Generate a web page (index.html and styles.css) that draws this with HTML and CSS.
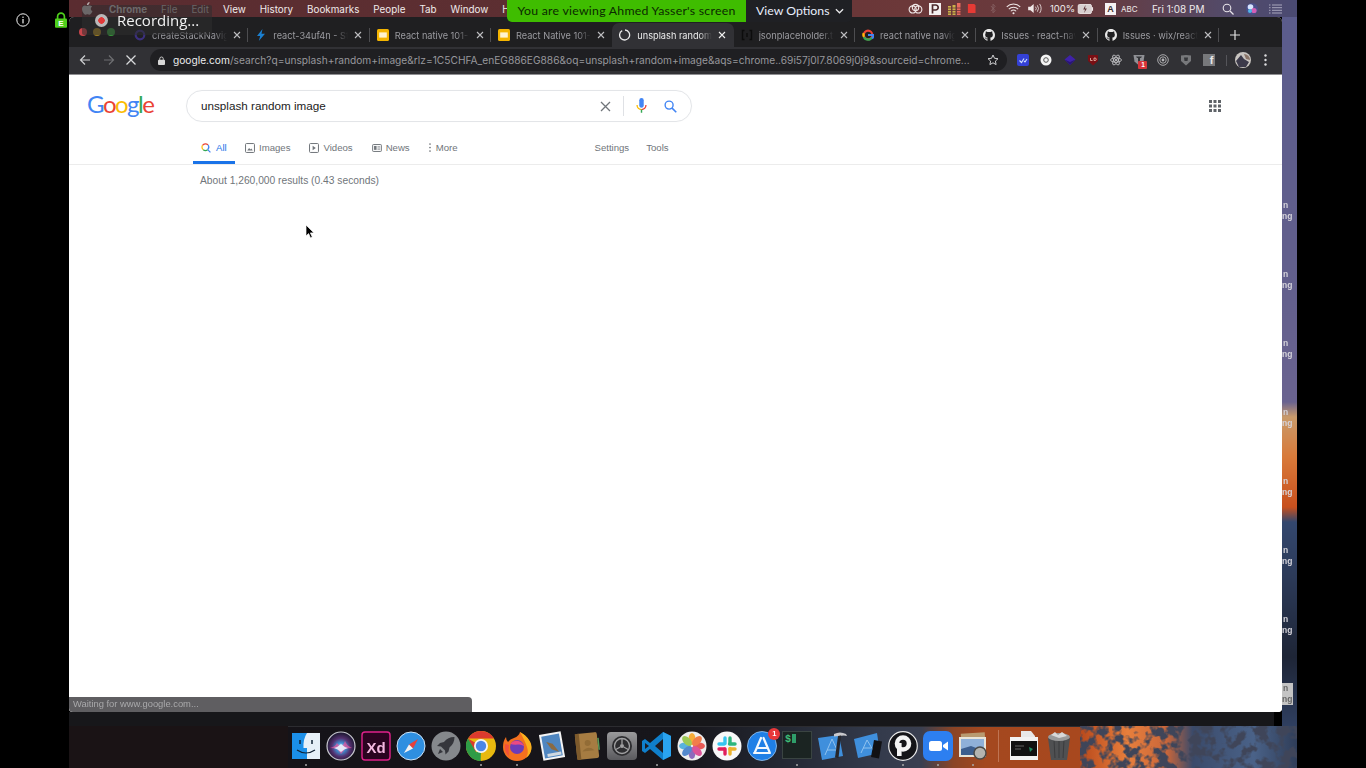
FILE: index.html
```html
<!DOCTYPE html>
<html lang="en">
<head>
<meta charset="utf-8">
<title>Google search screen share</title>
<link rel="stylesheet" href="styles.css">
</head>
<body>
<svg class="defs" width="0" height="0" aria-hidden="true">
  <symbol id="gh" viewBox="0 0 16 16"><path fill="#e8e8e8" d="M8 0C3.58 0 0 3.58 0 8c0 3.54 2.29 6.53 5.47 7.59.4.07.55-.17.55-.38 0-.19-.01-.82-.01-1.49-2.01.37-2.53-.49-2.69-.94-.09-.23-.48-.94-.82-1.13-.28-.15-.68-.52-.01-.53.63-.01 1.08.58 1.23.82.72 1.21 1.87.87 2.33.66.07-.52.28-.87.51-1.07-1.78-.2-3.64-.89-3.64-3.95 0-.87.31-1.59.82-2.15-.08-.2-.36-1.02.08-2.12 0 0 .67-.21 2.2.82.64-.18 1.32-.27 2-.27.68 0 1.36.09 2 .27 1.53-1.04 2.2-.82 2.2-.82.44 1.1.16 1.92.08 2.12.51.56.82 1.27.82 2.15 0 3.07-1.87 3.75-3.65 3.95.29.25.54.73.54 1.48 0 1.07-.01 1.93-.01 2.2 0 .21.15.46.55.38A8.013 8.013 0 0016 8c0-4.42-3.58-8-8-8z"/></symbol>
  <symbol id="slides" viewBox="0 0 12 12"><rect width="12" height="12" rx="1.5" fill="#f4b400"/><rect x="2.2" y="3.4" width="7.6" height="5.2" fill="#fff3cf"/></symbol>
  <symbol id="x" viewBox="0 0 8 8"><path d="M1 1l6 6M7 1L1 7" stroke="currentColor" stroke-width="1.1" fill="none"/></symbol>
  <symbol id="gcolor" viewBox="0 0 12 12"><circle cx="6" cy="6" r="4.3" fill="none" stroke="#ea4335" stroke-width="2.2"/><path d="M2 8a4.4 4.4 0 0 0 8 .2" fill="none" stroke="#34a853" stroke-width="2.2"/><path d="M1.7 4.2a4.4 4.4 0 0 0 .2 3.6" fill="none" stroke="#fbbc05" stroke-width="2.2"/><path d="M6 6h5.6a5.6 5.6 0 0 1-1.6 3.6" fill="none" stroke="#4285f4" stroke-width="2.1"/></symbol>
</svg>
<div class="screen">
  <aside class="side side-left">
    <svg class="info" viewBox="0 0 14 14"><circle cx="7" cy="7" r="6.2" fill="none" stroke="#f4f4f4" stroke-width="1"/><rect x="6.4" y="6" width="1.2" height="4.4" fill="#f4f4f4"/><rect x="6.4" y="3.6" width="1.2" height="1.3" fill="#f4f4f4"/></svg>
    <svg class="green-lock" viewBox="0 0 12 16"><path d="M2.6 7V4.6a3.4 3.4 0 0 1 6.8 0V7" fill="none" stroke="#4fd01c" stroke-width="1.7"/><rect y="6.4" width="12" height="9.4" rx="1" fill="#4fd01c"/><text x="6" y="14" class="lock-e">E</text></svg>
  </aside>

  <main class="desktop">
    <header class="menubar">
      <nav class="menu-left">
        <svg class="apple" viewBox="0 0 12 14"><path fill="#b5adad" d="M8.3 0c.1 1-.3 1.800-.8 2.400-.5.600-1.300 1.100-2.100 1C5.300 2.500 5.700 1.600 6.200 1.100 6.700.5 7.600.1 8.300 0zM11 4.800c-.9.600-1.400 1.400-1.400 2.400 0 1.200.7 2.100 1.800 2.600-.3.900-.7 1.700-1.200 2.400-.7 1-1.300 1.600-2.100 1.600-.8 0-1.100-.5-2.100-.5s-1.400.5-2.100.5c-.8 0-1.500-.7-2.200-1.700C.7 10.800 0 8.900 0 7.500c0-2.200 1.400-3.700 3.200-3.700.9 0 1.600.6 2.200.6.500 0 1.400-.7 2.500-.7.900 0 2.300.3 3.100 1.100z"/></svg>
        <span class="m-app">Chrome</span><span class="m-dim">File</span><span class="m-dim">Edit</span><span>View</span><span>History</span><span>Bookmarks</span><span>People</span><span>Tab</span><span>Window</span><span>H</span>
      </nav>
      <div class="menu-right">
        <svg class="st st-cc" viewBox="0 0 16 12"><g fill="none" stroke="#f0e8e8" stroke-width="1.2"><circle cx="5" cy="6.500" r="3.800"/><circle cx="11" cy="6.500" r="3.800"/><circle cx="8" cy="4.500" r="3.400"/></g></svg>
        <svg class="st st-p" viewBox="0 0 12 12"><rect width="12" height="12" fill="#f4f0f0"/><path d="M3.500 10.500V2h3.200a2.500 2.500 0 0 1 0 5H3.500" fill="none" stroke="#4d2a2c" stroke-width="1.700"/></svg>
        <svg class="st st-bars" viewBox="0 0 13 12"><rect x="0" y="3" width="3" height="9" fill="#c9b24a"/><rect x="4.500" y="2" width="3" height="10" fill="#c9b24a"/><rect x="9" y="0" width="3.500" height="12" fill="#e86a5f"/><path d="M0 5h13M0 7.500h13M0 10h13" stroke="#6a3638" stroke-width=".8"/></svg>
        <svg class="st st-red" viewBox="0 0 10 12"><path d="M1 1h7l1.500 1.500V11H1z" fill="#e63a35"/></svg>
        <svg class="st st-bt" viewBox="0 0 7 12"><path d="M1 3l5 5.500L3.500 11V1L6 3.500 1 9" fill="none" stroke="#8a6768" stroke-width=".9"/></svg>
        <svg class="st st-wifi" viewBox="0 0 16 12"><g fill="none" stroke="#f0e8e8" stroke-width="1.100"><path d="M.8 3.800a10 10 0 0 1 14.400 0"/><path d="M3 6.200a7 7 0 0 1 10 0"/><path d="M5.200 8.400a4 4 0 0 1 5.600 0"/></g><circle cx="8" cy="10.500" r="1.100" fill="#f0e8e8"/></svg>
        <svg class="st st-vol" viewBox="0 0 16 12"><path d="M0 4h2.500L6 1v10L2.500 8H0z" fill="#f0e8e8"/><g fill="none" stroke="#f0e8e8" stroke-width=".9"><path d="M8 4a3 3 0 0 1 0 4"/><path d="M10 2.500a6 6 0 0 1 0 7"/><path d="M12.500 1a9 9 0 0 1 0 10"/></g></svg>
        <span class="st-pct">100%</span>
        <svg class="st st-batt" viewBox="0 0 17 11"><rect x=".5" y=".5" width="14.500" height="10" rx="1.500" fill="#d8cfcf" stroke="#f0e8e8"/><rect x="15.500" y="3.500" width="1.300" height="4" fill="#f0e8e8"/><path d="M8.500 1L6 6h2l-1 4 3-5H8z" fill="#5a3033"/></svg>
        <span class="st-a">A</span>
        <span class="st-abc">ABC</span>
        <span class="st-time">Fri 1:08 PM</span>
        <svg class="st st-search" viewBox="0 0 12 12"><circle cx="5" cy="5" r="3.800" fill="none" stroke="#e8e4ea" stroke-width="1.100"/><path d="M8 8l3.500 3.500" stroke="#e8e4ea" stroke-width="1.300"/></svg>
        <svg class="st st-siri" viewBox="0 0 12 12"><circle cx="6" cy="6" r="6" fill="#4a4f8a"/><circle cx="4.500" cy="4" r="2.800" fill="#d8e4ff"/><circle cx="8" cy="7.500" r="2.600" fill="#d25fb5"/><circle cx="4" cy="8" r="2" fill="#4fb4e8"/></svg>
        <svg class="st st-list" viewBox="0 0 13 10"><path d="M3 1h10M3 3.700h10M3 6.300h10M3 9h10M0 1h1.500M0 3.700h1.500M0 6.300h1.500M0 9h1.500" stroke="#a8a6bc" stroke-width="1"/></svg>
      </div>
    </header>

    <div class="middle">
      <section class="window-wrap">
        <div class="window">
          <div class="tabstrip">
            <div class="lights"><i class="l-r"></i><i class="l-y"></i><i class="l-g"></i></div>
            <div class="tab">
              <svg class="fav" viewBox="0 0 12 12"><circle cx="6" cy="6" r="4.300" fill="none" stroke="#3b2f7d" stroke-width="2.200"/></svg>
              <span class="title">createStackNavigator</span>
              <svg class="tx"><use href="#x"/></svg>
            </div>
            <div class="tab">
              <svg class="fav" viewBox="0 0 12 12"><path d="M7.500 0L2 7h3.200L3.800 12 10 4.800H6.500z" fill="#1a7fd0"/></svg>
              <span class="title">react-34uf4n - StackBlitz</span>
              <svg class="tx"><use href="#x"/></svg>
            </div>
            <div class="tab">
              <svg class="fav"><use href="#slides"/></svg>
              <span class="title">React native 101- Google Slides</span>
              <svg class="tx"><use href="#x"/></svg>
            </div>
            <div class="tab tab-before-active">
              <svg class="fav"><use href="#slides"/></svg>
              <span class="title">React Native 101- Google Slides</span>
              <svg class="tx"><use href="#x"/></svg>
            </div>
            <div class="tab tab-active">
              <svg class="fav" viewBox="0 0 12 12"><path d="M3.200 1.600A5 5 0 1 0 6 1" fill="none" stroke="#e8e8e8" stroke-width="1.300"/></svg>
              <span class="title">unsplash random image</span>
              <svg class="tx"><use href="#x"/></svg>
            </div>
            <div class="tab">
              <svg class="fav" viewBox="0 0 12 12"><path d="M3.500 1.500h-2v9h2M8.500 1.500h2v9h-2M6 4v4" fill="none" stroke="#0c0c0c" stroke-width="1.400"/></svg>
              <span class="title">jsonplaceholder.typicode.com</span>
              <svg class="tx"><use href="#x"/></svg>
            </div>
            <div class="tab">
              <svg class="fav"><use href="#gcolor"/></svg>
              <span class="title">react native navigation</span>
              <svg class="tx"><use href="#x"/></svg>
            </div>
            <div class="tab">
              <svg class="fav"><use href="#gh"/></svg>
              <span class="title">Issues · react-navigation</span>
              <svg class="tx"><use href="#x"/></svg>
            </div>
            <div class="tab">
              <svg class="fav"><use href="#gh"/></svg>
              <span class="title">Issues · wix/react-native</span>
              <svg class="tx"><use href="#x"/></svg>
            </div>
            <svg class="newtab" viewBox="0 0 10 10"><path d="M5 0v10M0 5h10" stroke="#e0e0e0" stroke-width="1.200"/></svg>
          </div>

          <div class="toolbar">
            <svg class="nav-ico nav-back" viewBox="0 0 12 12"><path d="M11 6H1.500M6 1.500L1.500 6 6 10.500" fill="none" stroke="#cfd0d2" stroke-width="1.200"/></svg>
            <svg class="nav-ico nav-fwd" viewBox="0 0 12 12"><path d="M1 6h9.500M6 1.500L10.500 6 6 10.500" fill="none" stroke="#6e6f72" stroke-width="1.200"/></svg>
            <svg class="nav-ico nav-stop" viewBox="0 0 12 12"><path d="M1.500 1.500l9 9M10.500 1.500l-9 9" fill="none" stroke="#d8d9db" stroke-width="1.300"/></svg>
            <div class="omnibox">
              <svg class="omni-lock" viewBox="0 0 8 10"><path d="M2 4.500V3a2 2 0 0 1 4 0v1.500" fill="none" stroke="#d8d8d8" stroke-width="1"/><rect y="4" width="8" height="6" rx="1" fill="#d8d8d8"/></svg>
              <span class="url"><b>google.com</b>/search?q=unsplash+random+image&amp;rlz=1C5CHFA_enEG886EG886&amp;oq=unsplash+random+image&amp;aqs=chrome..69i57j0l7.8069j0j9&amp;sourceid=chrome...</span>
              <svg class="omni-star" viewBox="0 0 12 12"><path d="M6 1l1.500 3.300 3.500.4-2.600 2.400.7 3.500L6 8.800l-3.100 1.800.7-3.500L1 4.700l3.500-.4z" fill="none" stroke="#d0d0d2" stroke-width="1"/></svg>
            </div>
            <div class="exts">
              <svg class="ext" viewBox="0 0 12 12"><rect width="12" height="12" rx="2" fill="#3441d6"/><path d="M2.500 6.500l2 2 2.500-4M7 7l1 1 2-3" fill="none" stroke="#cfe0ff" stroke-width="1.100"/></svg>
              <svg class="ext" viewBox="0 0 12 12"><circle cx="6" cy="6" r="5.500" fill="#f4f4f4"/><circle cx="6" cy="6" r="2.300" fill="none" stroke="#555" stroke-width="1"/></svg>
              <svg class="ext" viewBox="0 0 12 12"><path d="M6 1l5.500 4.500L6 11 .5 5.500z" fill="#3f22a8"/><path d="M.5 5.500L6 8l5.500-2.500L6 11z" fill="#2a1675"/></svg>
              <svg class="ext" viewBox="0 0 12 12"><path d="M1 1h10v6l-5 4.500L1 7z" fill="#7a0f14"/><path d="M3.500 4v2.500h2M7 4v2.500h1a1.250 1.250 0 0 0 0-2.500z" fill="none" stroke="#f0c0b0" stroke-width=".8"/></svg>
              <svg class="ext" viewBox="0 0 12 12"><g fill="none" stroke="#cfcfd2" stroke-width=".8"><ellipse cx="6" cy="6" rx="5.500" ry="2.200"/><ellipse cx="6" cy="6" rx="5.500" ry="2.200" transform="rotate(60 6 6)"/><ellipse cx="6" cy="6" rx="5.500" ry="2.200" transform="rotate(120 6 6)"/></g><circle cx="6" cy="6" r="1.100" fill="#cfcfd2"/></svg>
              <span class="ext-badged">
                <svg class="ext" viewBox="0 0 12 12"><path d="M.5 1h11l-1 6.500L6 11.500 1.500 7.500z" fill="#8f9095"/><path d="M3 2.500h6L8 4H7v5H5V4H4z" fill="#35363a"/></svg>
                <em class="ext-count">1</em>
              </span>
              <svg class="ext" viewBox="0 0 12 12"><g fill="none" stroke="#b5b5b8"><circle cx="6" cy="6" r="5.300" stroke-width=".9"/><circle cx="6" cy="6" r="3.200" stroke-width=".9"/></g><circle cx="6" cy="6" r="1.400" fill="#b5b5b8"/></svg>
              <svg class="ext" viewBox="0 0 12 12"><path d="M1 1.500Q6 .5 11 1.500V7L6 11.500 1 7z" fill="#77787b"/><path d="M4 3.500h4L7.500 7h-3z" fill="#35363a"/></svg>
              <span class="ext-f">f</span>
              <i class="ext-sep"></i>
              <svg class="avatar" viewBox="0 0 16 16"><circle cx="8" cy="8" r="8" fill="#c8c4c0"/><path d="M1 9l5-6 3 4 5 3-3 5H4z" fill="#3c3a4a"/><path d="M9 2a6 6 0 0 1 6 6l-4-1z" fill="#8a7468"/></svg>
              <svg class="dots" viewBox="0 0 3 12"><circle cx="1.500" cy="1.500" r="1.200" fill="#dcdcde"/><circle cx="1.500" cy="6" r="1.200" fill="#dcdcde"/><circle cx="1.500" cy="10.500" r="1.200" fill="#dcdcde"/></svg>
            </div>
          </div>

          <div class="page">
            <div class="g-head">
              <div class="g-logo"><span class="c-b">G</span><span class="c-r">o</span><span class="c-y">o</span><span class="c-b">g</span><span class="c-g">l</span><span class="c-r">e</span></div>
              <div class="g-search">
                <span class="g-query">unsplash random image</span>
                <svg class="g-clear" viewBox="0 0 11 11"><path d="M1 1l9 9M10 1l-9 9" stroke="#70757a" stroke-width="1.300" fill="none"/></svg>
                <i class="g-sep"></i>
                <svg class="g-mic" viewBox="0 0 12 18"><rect x="3.500" y="0" width="5" height="11" rx="2.500" fill="#4285f4"/><path d="M1 8a5 5 0 0 0 5 5" fill="none" stroke="#fbbc05" stroke-width="1.500"/><path d="M6 13a5 5 0 0 0 5-5" fill="none" stroke="#ea4335" stroke-width="1.500"/><path d="M6 13v3.500" stroke="#34a853" stroke-width="1.600"/></svg>
                <svg class="g-mag" viewBox="0 0 14 14"><circle cx="5.500" cy="5.500" r="4.300" fill="none" stroke="#4285f4" stroke-width="1.500"/><path d="M8.700 8.700l4.500 4.500" stroke="#4285f4" stroke-width="1.700"/></svg>
              </div>
              <svg class="g-apps" viewBox="0 0 12 12"><g fill="#5f6368"><rect width="3" height="3"/><rect x="4.500" width="3" height="3"/><rect x="9" width="3" height="3"/><rect y="4.500" width="3" height="3"/><rect x="4.500" y="4.500" width="3" height="3"/><rect x="9" y="4.500" width="3" height="3"/><rect y="9" width="3" height="3"/><rect x="4.500" y="9" width="3" height="3"/><rect x="9" y="9" width="3" height="3"/></g></svg>
            </div>
            <nav class="g-nav">
              <div class="g-tab g-tab-on">
                <svg class="g-ti" viewBox="0 0 12 12"><path d="M8 8l3.300 3.300" stroke="#4285f4" stroke-width="1.500"/><path d="M1.800 2.800A4.400 4.400 0 0 1 8.400 2.200" fill="none" stroke="#ea4335" stroke-width="1.400"/><path d="M1.800 2.800A4.400 4.400 0 0 0 2.600 8" fill="none" stroke="#fbbc05" stroke-width="1.400"/><path d="M2.600 8A4.400 4.400 0 0 0 8 8" fill="none" stroke="#34a853" stroke-width="1.400"/><path d="M8 8A4.400 4.400 0 0 0 8.400 2.200" fill="none" stroke="#4285f4" stroke-width="1.400"/></svg>
                <span>All</span>
              </div>
              <div class="g-tab">
                <svg class="g-ti" viewBox="0 0 11 11"><rect x=".6" y=".6" width="9.800" height="9.800" rx="1" fill="none" stroke="#70757a" stroke-width="1.100"/><path d="M2.500 8.200L4.500 5.500 6 7.200 7 6l1.500 2.200z" fill="#70757a"/></svg>
                <span>Images</span>
              </div>
              <div class="g-tab">
                <svg class="g-ti" viewBox="0 0 11 11"><rect x=".6" y=".6" width="9.800" height="9.800" rx="1" fill="none" stroke="#70757a" stroke-width="1.100"/><path d="M4 3l3.500 2.500L4 8z" fill="#70757a"/></svg>
                <span>Videos</span>
              </div>
              <div class="g-tab">
                <svg class="g-ti" viewBox="0 0 11 9"><rect x=".6" y=".6" width="9.800" height="7.800" rx=".8" fill="none" stroke="#70757a" stroke-width="1.100"/><rect x="2.200" y="2.200" width="2.800" height="4.400" fill="#70757a"/><path d="M6 3h3M6 4.500h3M6 6h3" stroke="#70757a" stroke-width=".7"/></svg>
                <span>News</span>
              </div>
              <div class="g-tab g-tab-more">
                <svg class="g-dots" viewBox="0 0 2 9"><circle cx="1" cy="1" r=".85" fill="#70757a"/><circle cx="1" cy="4.500" r=".85" fill="#70757a"/><circle cx="1" cy="8" r=".85" fill="#70757a"/></svg>
                <span>More</span>
              </div>
              <div class="g-tools"><span>Settings</span><span>Tools</span></div>
            </nav>
            <p class="g-stats">About 1,260,000 results (0.43 seconds)</p>
            <div class="status-bubble">Waiting for www.google.com...</div>
          </div>
        </div>
        <div class="win-shadow"></div>
      </section>
      <aside class="strip">
        <div class="lbl"><span>n</span><span>ng</span></div>
        <div class="lbl"><span>n</span><span>ng</span></div>
        <div class="lbl"><span>n</span><span>ng</span></div>
        <div class="lbl"><span>n</span><span>ng</span></div>
        <div class="lbl"><span>n</span><span>ng</span></div>
        <div class="lbl"><span>n</span><span>ng</span></div>
        <div class="lbl"><span>n</span><span>ng</span></div>
        <div class="lbl lbl-box"><span>n</span><span>ng</span></div>
      </aside>
    </div>

    <footer class="bottom">
      <div class="wall-left"></div>
      <div class="dock">
        <div class="di dot"><svg viewBox="0 0 30 30"><rect x="1" y="2" width="28" height="26" fill="#e6f0f8"/><path d="M1 2h15q-4 6-3.500 15H16v11H1z" fill="#1b8fe8"/><path d="M9 9v4M21 9v4" stroke="#123" stroke-width="1.500"/><path d="M6 19q9 6 18 0" fill="none" stroke="#123" stroke-width="1.200"/></svg></div>
        <div class="di"><svg viewBox="0 0 30 30"><defs><radialGradient id="sg" cx=".5" cy=".55" r=".55"><stop offset="0" stop-color="#dff0ff"/><stop offset=".3" stop-color="#3f8ed0"/><stop offset=".6" stop-color="#53306f"/><stop offset="1" stop-color="#15152a"/></radialGradient></defs><circle cx="15" cy="15" r="14" fill="url(#sg)" stroke="#c8c8d0" stroke-width="1.200"/><path d="M4 17q5-1 7-5 2 3 4 3 2 0 4-5 2 5 7 7-4 0-7 1-2 3-4 5-2-3-4-5-3-1-7-1z" fill="#e6579f" opacity=".75"/><path d="M8 17q4-1 7-4 3 3 7 4-4 1-7 4-3-3-7-4z" fill="#e8f5ff" opacity=".9"/></svg></div>
        <div class="di"><svg viewBox="0 0 30 30"><rect x="1" y="1" width="28" height="28" rx="3" fill="#2b0320" stroke="#e0218a" stroke-width="1.400"/><text x="15" y="21.500" class="xd-t">Xd</text></svg></div>
        <div class="di"><svg viewBox="0 0 30 30"><circle cx="15" cy="15" r="14" fill="#2f8fe0" stroke="#cfe4f6" stroke-width="1"/><path d="M22 8l-9 5.500 4 4z" fill="#e8403a"/><path d="M8 22l5-8.500 4 4z" fill="#f2f2f2"/></svg></div>
        <div class="di"><svg viewBox="0 0 30 30"><circle cx="15" cy="15" r="14.500" fill="#85888c"/><path d="M23 6q-6 0-10 5l-4 1-3 3 4 .5 4 4 .5 4 3-3 1-4q5-4 5-10.500zM9 18l-2 5 5-2z" fill="#35363c"/></svg></div>
        <div class="di dot"><svg viewBox="0 0 30 30"><circle cx="15" cy="15" r="15" fill="#e8b90f"/><path d="M15 0a15 15 0 0 1 13 7.500H15z M2 7.500A15 15 0 0 1 15 0v7.500z M2 7.500L9 21 15 15z" fill="#db3a2e"/><path d="M2 7.500L10 21 15 30A15 15 0 0 1 2 7.500z" fill="#2e9b46"/><path d="M10 21h5l-.5 9H13z" fill="#2e9b46"/><circle cx="15" cy="15" r="7" fill="#f4f4f4"/><circle cx="15" cy="15" r="5.200" fill="#4a86e8"/></svg></div>
        <div class="di dot"><svg viewBox="0 0 30 30"><path d="M15 30A14 14 0 0 1 1 16q0-6 3-10 0 3 2 5 2-3 6-4 5-2 6-6 5 3 7 6 4 4 4 9a14 14 0 0 1-14 14z" fill="#f3701f"/><path d="M18 1q6 3 9 8 3 4 2.500 9-1 6-5.500 9 3-5 1-11-2-6-7-15z" fill="#fbb01d"/><path d="M3 13q-1 8 4 12-1-6 0-11z" fill="#f14f3c"/><circle cx="15" cy="16" r="7" fill="#6c3cb8"/><path d="M8.500 13q3-4 8-3 4 1 5.500 5-3-2-6-1.500-4 .5-7.500-.5z" fill="#ea4a83"/></svg></div>
        <div class="di"><svg viewBox="0 0 30 30"><g transform="rotate(-10 15 15)"><rect x="4" y="2" width="22" height="26" fill="#f4f4f4"/><rect x="6" y="4" width="18" height="22" fill="#4f86c0"/><path d="M10 10l6 3 5 9-7-4z" fill="#8a6a42"/><path d="M9 22h14v3H9z" fill="#cfd8e0"/></g></svg></div>
        <div class="di"><svg viewBox="0 0 30 30"><g transform="rotate(-6 15 15)"><rect x="4" y="2" width="22" height="26" rx="2" fill="#a67c42"/><rect x="4" y="2" width="4" height="26" fill="#7d5a2c"/><rect x="26" y="8" width="1.500" height="12" fill="#5a9c5a"/><circle cx="16" cy="12" r="3" fill="#926c36"/><path d="M10 20q6-6 12 0z" fill="#926c36"/></g></svg></div>
        <div class="di"><svg viewBox="0 0 30 30"><defs><linearGradient id="pg" x1="0" y1="0" x2="0" y2="1"><stop offset="0" stop-color="#9a9a9c"/><stop offset="1" stop-color="#5a5a5e"/></linearGradient></defs><rect x="0" y="1" width="30" height="28" rx="4" fill="url(#pg)"/><circle cx="15" cy="15" r="10" fill="#2d2d30"/><circle cx="15" cy="15" r="7.500" fill="none" stroke="#a0a0a2" stroke-width="1.300"/><circle cx="15" cy="15" r="2" fill="#a0a0a2"/><path d="M15 13V7.500M13.300 16l-5 2.800M16.700 16l5 2.800" stroke="#a0a0a2" stroke-width="1.300"/></svg></div>
        <div class="di dot"><svg viewBox="0 0 30 30"><path d="M21 1l8 4v20l-8 4-13-11-5 4-3-2V10l3-2 5 4z" fill="#0f7fcb"/><path d="M21 1l8 4v20l-8 4z" fill="#2aa3ef"/><path d="M21 8l-8 7 8 7z" fill="#1d1c22"/><path d="M3 12l4 3-4 3z" fill="#1d1c22"/></svg></div>
        <div class="di"><svg viewBox="0 0 30 30"><circle cx="15" cy="15" r="14.500" fill="#eeeeee"/><g opacity=".85"><ellipse cx="15" cy="8" rx="3.500" ry="6" fill="#f9a21a"/><ellipse cx="15" cy="22" rx="3.500" ry="6" fill="#7d55b5"/><ellipse cx="8" cy="15" rx="6" ry="3.500" fill="#3fa8dc"/><ellipse cx="22" cy="15" rx="6" ry="3.500" fill="#e8413c"/><ellipse cx="10" cy="10" rx="3.500" ry="6" fill="#8fc43c" transform="rotate(-45 10 10)"/><ellipse cx="20" cy="10" rx="3.500" ry="6" fill="#f26a2e" transform="rotate(45 20 10)"/><ellipse cx="10" cy="20" rx="3.500" ry="6" fill="#3a78c8" transform="rotate(45 10 20)"/><ellipse cx="20" cy="20" rx="3.500" ry="6" fill="#d83a8a" transform="rotate(-45 20 20)"/></g></svg></div>
        <div class="di"><svg viewBox="0 0 30 30"><circle cx="15" cy="15" r="14.500" fill="#f8f8f8"/><g stroke-linecap="round" stroke-width="3.400"><path d="M13 7v5.500" stroke="#36c5f0"/><path d="M7 13h5" stroke="#36c5f0"/><path d="M23 13h-5.500" stroke="#2eb67d"/><path d="M18 7v5" stroke="#2eb67d"/><path d="M18 23v-5.500" stroke="#ecb22e"/><path d="M23 18h-5" stroke="#ecb22e"/><path d="M7 18h5.500" stroke="#e01e5a"/><path d="M13 23v-5" stroke="#e01e5a"/></g></svg></div>
        <div class="di"><svg viewBox="0 0 30 30"><circle cx="15" cy="15" r="14.500" fill="#1f7fe6" stroke="#9ac8f4" stroke-width=".8"/><path d="M7 22h16M16.500 7l6 14M14 7l-6 14M11 17h9" stroke="#f2f7fd" stroke-width="2.200" stroke-linecap="round"/></svg><em class="dock-badge">1</em></div>
        <div class="di dot"><svg viewBox="0 0 30 30"><rect x=".5" y=".5" width="29" height="27" fill="#1b2422" stroke="#3a4442"/><text x="3" y="11" class="term-t">$</text><rect x="10" y="3" width="4" height="9" fill="#2f9e6a"/></svg></div>
        <div class="di"><svg viewBox="0 0 30 30"><path d="M1 7l21-3 4 21-21 4z" fill="#3f8fdc"/><path d="M8 24l7-16 6 13M10 19h10" fill="none" stroke="#8fc2ef" stroke-width="1"/><path d="M17 3q6-3 12 0l1 2-3-.5-10 1z" fill="#c8c8cc"/><path d="M21 5l3-.5-2.500 22.500-3.500-.5z" fill="#26262a"/></svg></div>
        <div class="di"><svg viewBox="0 0 30 30"><path d="M1 8l23-6 3 20-22 5z" fill="#3f8fdc"/><path d="M8 22l6-13 6 10M10 17h8" fill="none" stroke="#8fc2ef" stroke-width="1"/><path d="M21 9l8 1.500-3 17-8-1.500z" fill="#111114"/></svg></div>
        <div class="di dot"><svg viewBox="0 0 30 30"><circle cx="15" cy="15" r="14.300" fill="#141418" stroke="#e8e8e8" stroke-width="1.200"/><circle cx="15" cy="12.500" r="6" fill="none" stroke="#f4f4f4" stroke-width="4.600"/><rect x="9" y="12" width="4.600" height="13" fill="#f4f4f4"/></svg></div>
        <div class="di dot"><svg viewBox="0 0 30 30"><rect width="30" height="30" rx="7" fill="#2d7ff0"/><rect x="6" y="10" width="13" height="10" rx="2.500" fill="#fff"/><path d="M20 14l5-3.500v9L20 16z" fill="#fff"/></svg></div>
        <div class="di dot"><svg viewBox="0 0 30 30"><rect x="3" y="2" width="24" height="8" fill="#b89a70" transform="rotate(-4 15 6)"/><rect x="1" y="6" width="27" height="20" fill="#e8e4d8"/><rect x="3" y="8" width="23" height="16" fill="#8fb0d8"/><path d="M3 18l10-3 13 5v4H3z" fill="#3c5e8e"/><circle cx="22" cy="22" r="6" fill="#b4b4b0" stroke="#4a4a48" stroke-width="1.500"/></svg></div>
        <i class="dock-sep"></i>
        <div class="di"><svg viewBox="0 0 30 30"><path d="M12 0h10l4 5v4H12z" fill="#e8e8e8"/><rect x="1" y="6" width="28" height="23" fill="#f2f2f2"/><rect x="2" y="10" width="26" height="15" fill="#111"/><path d="M20 16l4 2-3 3z" fill="#1f8a5f"/><path d="M6 15h9M6 18h6" stroke="#777" stroke-width=".8"/></svg></div>
        <div class="di"><svg viewBox="0 0 30 30"><path d="M4 7h22l-3 22H7z" fill="#4f5052"/><path d="M10 9l1 18M15 9v18M20 9l-1 18" stroke="#3a3b3d" stroke-width="1"/><ellipse cx="15" cy="6" rx="11" ry="4" fill="#9a9a9a"/><path d="M7 4l4-3 3 3 4-3 5 4-8 2z" fill="#d8d8d8"/></svg></div>
      </div>
      <div class="wall-right"><svg class="rocks" viewBox="0 0 217 42" preserveAspectRatio="none"><defs><linearGradient id="wg"><stop offset="0" stop-color="#b8491c"/><stop offset=".22" stop-color="#e87f3c"/><stop offset=".4" stop-color="#c9663a"/><stop offset=".52" stop-color="#3a4a6a"/><stop offset=".8" stop-color="#4a6288"/><stop offset="1" stop-color="#2f3d58"/></linearGradient><filter id="noise" x="0" y="0" width="100%" height="100%"><feTurbulence type="fractalNoise" baseFrequency=".09" numOctaves="3" seed="7"/><feColorMatrix values="0 0 0 0 .05 0 0 0 0 .06 0 0 0 0 .1 6 0 0 0 -2.700"/></filter></defs><rect width="217" height="42" fill="url(#wg)"/><rect width="217" height="42" filter="url(#noise)"/></svg></div>
    </footer>

    <div class="rec"><i class="rec-dot"></i><span>Recording...</span></div>
    <div class="zoombar"><span class="zb-green">You are viewing Ahmed Yasser's screen</span><span class="zb-opts">View Options<svg class="zb-chev" viewBox="0 0 10 6"><path d="M1 1l4 4 4-4" fill="none" stroke="#e8e8ea" stroke-width="1.400"/></svg></span></div>
    <svg class="cursor" viewBox="0 0 10 15"><path d="M1 1v11l2.600-2.400 1.900 4.300 1.800-.8-1.900-4.200H9z" fill="#000" stroke="#fff" stroke-width=".7"/></svg>
  </main>

  <aside class="side"></aside>
</div>
</body>
</html>
```

FILE: styles.css
```css
* { box-sizing: border-box; }
html, body { margin: 0; padding: 0; background: #000; }
body { width: 1366px; height: 768px; overflow: hidden; font-family: "Liberation Sans", Arial, sans-serif; }
.defs { position: absolute; }
svg { display: block; flex: none; }

.screen { display: flex; width: 1366px; height: 768px; background: #000; }
.side { width: 69px; flex: none; background: #000; }
.side-left { display: flex; align-items: center; align-self: flex-start; height: 40px; padding-left: 16px; gap: 25px; }
.info { width: 14px; height: 14px; }
.green-lock { width: 12px; height: 16px; }
.lock-e { font: bold 8px "Liberation Sans", sans-serif; fill: #fff; text-anchor: middle; }

.desktop { position: relative; width: 1228px; height: 768px; flex: none; display: flex; flex-direction: column; overflow: hidden; filter: blur(.35px); }

/* menu bar */
.menubar { height: 17px; flex: none; display: flex; align-items: center; justify-content: space-between; padding: 0 15px 0 13px; background: linear-gradient(90deg, #5a2c30 0%, #5d2f32 40%, #6c3839 68%, #663b40 84%, #534a68 94%, #4a4a72 100%); color: #f0ebeb; font: 9.85px "Inter", "Liberation Sans", sans-serif; }
.menu-left { display: flex; align-items: center; gap: 14px; white-space: nowrap; }
.apple { width: 11px; height: 13px; margin-right: 2px; }
.m-app { font-weight: 700; color: #b9b0b0; }
.m-dim { color: #b0a6a6; }
.menu-right { display: flex; align-items: center; white-space: nowrap; font-size: 10px; }
.st-cc { width: 15px; height: 12px; margin-right: 6px; }
.st-p { width: 12px; height: 12px; margin-right: 7px; }
.st-bars { width: 13px; height: 12px; margin-right: 6px; }
.st-red { width: 9px; height: 11px; margin-right: 14px; }
.st-bt { width: 6px; height: 11px; margin-right: 10px; }
.st-wifi { width: 15px; height: 12px; margin-right: 7px; }
.st-vol { width: 15px; height: 11px; margin-right: 7px; }
.st-pct { font-size: 9.5px; width: 24px; margin-right: 3px; }
.st-batt { width: 17px; height: 10px; margin-right: 11px; }
.st-a { width: 11px; height: 12px; background: #f6f2f2; color: #3b2a2c; font: bold 9px/12px "Liberation Sans", sans-serif; text-align: center; margin-right: 5px; }
.st-abc { font-size: 8px; width: 20px; margin-right: 11px; }
.st-time { font-size: 10px; width: 54px; margin-right: 16px; }
.st-search { width: 12px; height: 12px; margin-right: 12px; }
.st-siri { width: 12px; height: 12px; margin-right: 11px; }
.st-list { width: 13px; height: 10px; }

/* middle */
.middle { display: flex; height: 709px; flex: none; }
.window-wrap { width: 1213px; flex: none; display: flex; flex-direction: column; }
.window { height: 695px; display: flex; flex-direction: column; border-radius: 5px 5px 4px 4px; overflow: hidden; background: #fff; }
.win-shadow { height: 14px; width: 1205px; background: #17171a; }
.strip { flex: 1; padding-top: 183px; overflow: hidden; background: linear-gradient(180deg, #5b5c8c 0, #625f8c 260px, #6a6390 385px, #c99a6a 400px, #d87a3a 440px, #c8501e 490px, #33476e 505px, #2c3a58 560px, #1e2536 640px, #2f3f60 709px); }
.lbl { height: 69px; display: flex; flex-direction: column; font: bold 8.5px/11px "Liberation Sans", sans-serif; color: #d5d3da; }
.lbl span:first-child { padding-left: 1px; }
.lbl-box span { background: #c4c4c4; color: #666; width: 11px; }

/* tabs */
.tabstrip { height: 30px; flex: none; display: flex; align-items: stretch; background: #1f1f21; padding-top: 6px; }
.lights { width: 56px; flex: none; display: flex; align-items: center; gap: 6px; padding: 0 0 0 10px; margin-top: -6px; }
.lights i { width: 8px; height: 8px; border-radius: 50%; }
.l-r { background: #c8454b; }
.l-y { background: #a07f22; }
.l-g { background: #36963a; }
.tab { width: 121.33px; flex: none; display: flex; align-items: center; padding: 0 0 0 9px; color: #9b9ba0; position: relative; }
.tab::after { content: ""; position: absolute; right: -2px; top: 5px; height: 14px; width: 1px; background: #4d4d50; }
.tab-before-active::after { display: none; }
.tab-active { color: #ececec; }
.tab-active::after { top: 0; right: -2px; left: 2px; width: auto; height: 24px; background: #313135; border-radius: 7px 7px 0 0; z-index: 0; }
.tab-active > * { position: relative; z-index: 1; }
.fav { width: 12px; height: 12px; margin-right: 6px; }
.title { width: 75px; overflow: hidden; white-space: nowrap; font: 9.2px "Inter", "Liberation Sans", sans-serif; -webkit-mask-image: linear-gradient(90deg, #000 82%, transparent 100%); mask-image: linear-gradient(90deg, #000 82%, transparent 100%); }
.tx { width: 8px; height: 8px; margin-left: 6px; color: #bdbdc0; }
.tab-active .tx { color: #f0f0f0; }
.newtab { width: 10px; height: 10px; align-self: center; margin-left: 13px; }

/* toolbar */
.toolbar { height: 28px; flex: none; display: flex; align-items: center; background: #313135; border-bottom: 1px solid #8f8f92; padding-bottom: 1px; }
.nav-ico { width: 12px; height: 12px; }
.nav-back { margin-left: 10px; }
.nav-fwd { margin-left: 12px; }
.nav-stop { margin-left: 10px; }
.omnibox { width: 857px; height: 22px; margin-left: 13px; display: flex; align-items: center; background: #1f1f22; border-radius: 11px; padding: 0 8px; }
.omni-lock { width: 7px; height: 9px; margin-right: 8px; }
.url { width: 800px; overflow: hidden; white-space: nowrap; font: 10.2px "Inter", "Liberation Sans", sans-serif; color: #97979c; }
.url b { font-weight: 400; color: #ececec; }
.omni-star { width: 12px; height: 12px; margin-left: 15px; }
.exts { display: flex; align-items: center; gap: 11.3px; margin-left: 10px; }
.ext { width: 12px; height: 12px; }
.ext-badged { position: relative; display: block; }
.ext-count { position: absolute; left: 5px; top: 7px; width: 9px; height: 8px; background: #d8343a; color: #fff; font: bold 6.5px/8px "Liberation Sans", sans-serif; text-align: center; border-radius: 1px; }
.ext-f { width: 12px; height: 12px; background: #77787b; color: #e8e8e8; font: bold 11px/13px "Liberation Sans", sans-serif; text-align: right; padding-right: 2px; }
.ext-sep { width: 1px; height: 11px; background: #55555a; margin-left: -1px; }
.avatar { width: 16px; height: 16px; margin-left: -3px; }
.dots { width: 3px; height: 12px; margin-left: 2px; }

/* google page */
.page { flex: 1; position: relative; background: #fff; font-family: "Liberation Sans", Arial, sans-serif; }
.g-head { display: flex; align-items: center; padding: 15px 0 0 18px; }
.g-logo { width: 99px; height: 32px; font: 24px/28px "Lato", "Liberation Sans", sans-serif; letter-spacing: -1.5px; }
.c-b { color: #4285f4; }
.c-r { color: #ea4335; }
.c-y { color: #fbbc05; }
.c-g { color: #34a853; }
.g-search { width: 506px; height: 32px; border: 1px solid #e3e5e8; border-radius: 16px; display: flex; align-items: center; padding: 0 0 2px 14px; box-shadow: 0 0 1px rgba(0,0,0,.05); }
.g-query { width: 399px; font-size: 11.7px; color: #222; }
.g-clear { width: 11px; height: 11px; margin-top: 2px; }
.g-sep { width: 1px; height: 20px; background: #dfe1e5; margin: 2px 0 0 12px; }
.g-mic { width: 11px; height: 16px; margin: 2px 0 0 12px; }
.g-mag { width: 13px; height: 13px; margin: 2px 0 0 17px; }
.g-apps { width: 12px; height: 12px; margin-left: 517px; }
.g-nav { display: flex; align-items: stretch; height: 42px; margin-top: 1px; padding-left: 124px; border-bottom: 1px solid #ececec; font-size: 9.6px; color: #70757a; }
.g-tab { display: flex; align-items: center; gap: 4px; padding: 8px 0 0 0; margin-right: 19px; }
.g-tab-on { width: 42px; padding: 11px 0 0 8px; margin-right: 10px; gap: 5px; color: #1a73e8; border-bottom: 3px solid #1a73e8; }
.g-ti { width: 10px; height: 10px; }
.g-tab:nth-child(4) .g-ti { height: 8px; }
.g-tab-more { gap: 5px; margin-right: 0; }
.g-dots { width: 2px; height: 9px; }
.g-tools { display: flex; align-items: center; gap: 17px; padding-top: 8px; margin-left: 137px; }
.g-stats { margin: 9px 0 0 131px; font-size: 10.25px; line-height: 13px; color: #70757a; }
.status-bubble { position: absolute; left: 0; bottom: 0; width: 403px; height: 15px; background: #5f5e61; border-radius: 0 4px 0 0; color: #a9a9ab; font-size: 9.4px; line-height: 14px; padding-left: 4px; }

/* bottom */
.bottom { height: 42px; flex: none; display: flex; }
.wall-left { width: 219px; flex: none; background: #1a1315; }
.dock { width: 792px; flex: none; display: flex; align-items: flex-start; gap: 5.1px; padding: 4px 0 0 3px; border-top: 1px solid #2c2c30; background: linear-gradient(90deg, #151318 0, #17161b 50%, #232732 62%, #333a4b 74%, #3a3f50 80%, #8a4426 84%, #a4481f 88%, #a8481e 100%); }
.di { width: 30px; height: 30px; flex: none; position: relative; }
.di svg { width: 30px; height: 30px; }
.di.dot::after { content: ""; position: absolute; left: 14px; top: 33px; width: 2px; height: 2px; border-radius: 50%; background: #a8a8a8; }
.dock-sep { width: 1px; height: 32px; background: rgba(240,200,180,.35); margin: -1px 4.9px 0; flex: none; }
.dock-badge { position: absolute; right: -3px; top: -3px; width: 12px; height: 12px; border-radius: 50%; background: #e8383a; color: #fff; font: bold 7.5px/12px "Liberation Sans", sans-serif; text-align: center; }
.xd-t { font: bold 15px "Liberation Sans", sans-serif; fill: #f4b8e0; text-anchor: middle; }
.term-t { font: bold 10px "Liberation Mono", monospace; fill: #3fc07a; }
.wall-right { flex: 1; min-width: 0; }
.rocks { width: 100%; height: 42px; }

/* overlays */
.rec { position: absolute; left: 13px; top: 5px; width: 130px; height: 30px; display: flex; align-items: center; gap: 9px; padding-left: 13px; background: rgba(45,45,48,.55); border-radius: 2px; color: #f2f2f2; font: 15px/30px "Open Sans", "Liberation Sans", sans-serif; }
.rec-dot { width: 13px; height: 13px; border-radius: 50%; background: radial-gradient(circle, #e23a3a 0 3px, #b9b9b9 3.5px); flex: none; }
.zoombar { position: absolute; left: 438px; top: 0; height: 22px; display: flex; font: 12.3px/22px "Lato", "Liberation Sans", sans-serif; border-radius: 0 0 5px 5px; overflow: hidden; }
.zb-green { width: 239px; background: #3fbd00; color: #0b2a00; text-align: center; letter-spacing: .25px; }
.zb-opts { width: 106px; background: #1f2024; color: #e8eefc; display: flex; align-items: center; gap: 5px; padding-left: 10px; }
.zb-chev { width: 9px; height: 6px; }
.cursor { position: absolute; left: 236px; top: 224px; width: 10px; height: 15px; }
```
